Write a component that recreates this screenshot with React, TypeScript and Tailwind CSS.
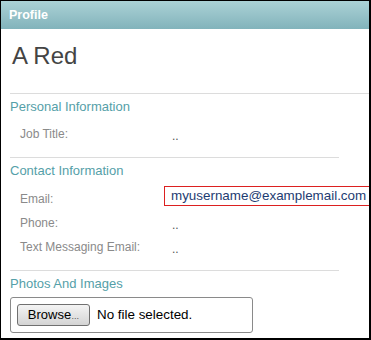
import React from 'react';

const Row: React.FC<{ label: string; children: React.ReactNode }> = ({ label, children }) => (
  <div className="flex h-[24px] items-start pl-[10px]">
    <div className="w-[152px] shrink-0 text-[12px] leading-[24px] text-[#8a8a8a]">{label}</div>
    {children}
  </div>
);

const Dots = () => <div className="pt-[2px] text-[12px] leading-[24px] text-[#555]">..</div>;

const SectionTitle: React.FC<{ children: React.ReactNode }> = ({ children }) => (
  <h2 className="mt-[3px] h-[20px] text-[13px] leading-[20px] text-[#55a0a8]">{children}</h2>
);

export default function App() {
  return (
    <div className="h-[340px] w-[371px] overflow-hidden border-t border-l border-r-2 border-b-2 border-black bg-white font-['Liberation_Sans',Arial,sans-serif]">
      <div className="h-[28px] bg-gradient-to-b from-[#abd2d6] to-[#82b3bb] pl-[8px] text-[12.5px] font-bold leading-[28px] text-white">
        Profile
      </div>

      <div className="pl-[9px]">
        <h1 className="mt-[13px] h-[28px] pl-[2px] text-[24px] leading-[28px] text-[#444]">A Red</h1>

        <div className="mt-[23px] border-t border-[#dcdcdc]">
          <SectionTitle>Personal Information</SectionTitle>
          <div className="mt-[5px] pb-[11px]">
            <Row label="Job Title:">
              <Dots />
            </Row>
          </div>
        </div>

        <div className="w-[329px] border-t border-[#dcdcdc]">
          <SectionTitle>Contact Information</SectionTitle>
          <div className="mt-[6px] pb-[11px]">
            <Row label="Email:">
              <div className="-mt-[1px] -ml-[8px] h-[20px] w-[206px] shrink-0 overflow-hidden whitespace-nowrap border border-[#dc2020] pl-[6px] text-[13.4px] leading-[18px] text-[#1e3c72]">
                myusername@examplemail.com
              </div>
            </Row>
            <Row label="Phone:">
              <Dots />
            </Row>
            <Row label="Text Messaging Email:">
              <Dots />
            </Row>
          </div>
        </div>

        <div className="w-[329px] border-t border-[#dcdcdc]">
          <SectionTitle>Photos And Images</SectionTitle>
          <div className="mt-[3px] flex h-[36px] w-[243px] items-start rounded-[3px] border border-[#8a8a8a] pt-[6px] pl-[6px]">
            <button className="h-[22px] w-[73px] rounded-[3px] border border-[#707070] bg-gradient-to-b from-[#f4f4f4] to-[#d4d4d4] text-[13px] leading-[20px] text-black">
              Browse<span className="text-[8px]">…</span>
            </button>
            <span className="ml-[7px] text-[13.4px] leading-[22px] text-black">No file selected.</span>
          </div>
        </div>
      </div>
    </div>
  );
}
